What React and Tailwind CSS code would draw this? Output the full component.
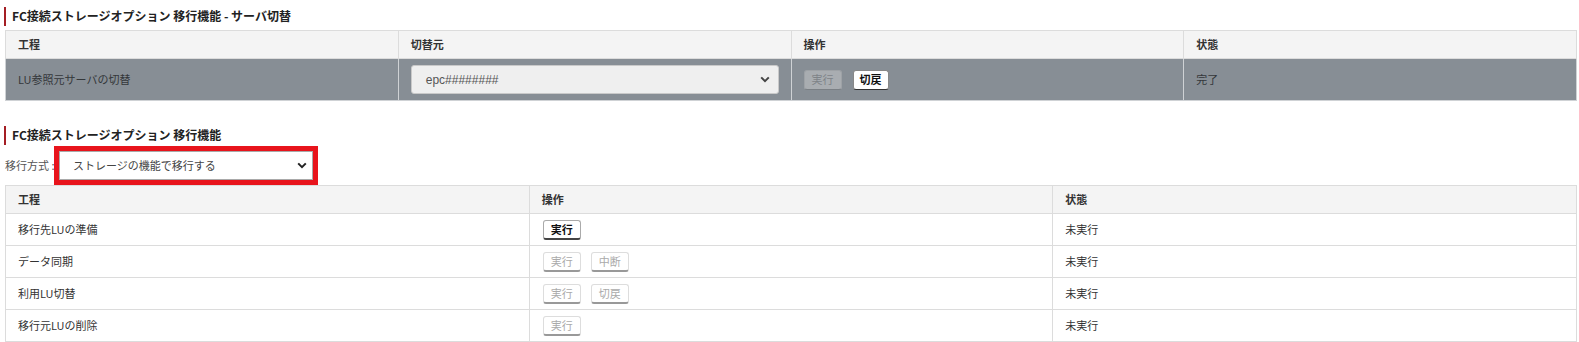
const font = "font-['Noto_Sans_CJK_JP','Noto_Sans',sans-serif]";

const Chevron = ({ className = "" }) => (
  <svg width="10" height="7" viewBox="0 0 10 7" className={className}>
    <path d="M1.2 1.4 5 5.2 8.8 1.4" fill="none" stroke="currentColor" strokeWidth="2" />
  </svg>
);

const SectionTitle = ({ children }) => (
  <div className="flex items-center h-[20px] pl-[4px]">
    <div className="w-[2px] h-[19px] bg-[#a41e24]" />
    <div className="pl-[6px] text-[12px] font-bold text-[#222]">{children}</div>
  </div>
);

const Btn = ({ children, active, dark }) => {
  if (dark) {
    return active ? (
      <div className="w-[36px] h-[20px] flex items-center justify-center rounded-[3px] bg-white border border-[#888] border-b-[#333] text-[11px] font-bold text-[#111]">
        {children}
      </div>
    ) : (
      <div className="w-[38px] h-[20px] flex items-center justify-center rounded-[3px] bg-[#a9adb1] border border-[#9ea2a6] border-b-[#7b8085] text-[11px] text-[#7e8388]">
        {children}
      </div>
    );
  }
  return active ? (
    <div className="w-[38px] h-[20px] flex items-center justify-center rounded-[3px] bg-white border border-[#aaa] border-b-2 border-b-[#444] text-[11px] font-bold text-[#111]">
      {children}
    </div>
  ) : (
    <div className="w-[38px] h-[20px] flex items-center justify-center rounded-[3px] bg-white border border-[#ddd] border-b-2 border-b-[#999] text-[11px] text-[#aaa]">
      {children}
    </div>
  );
};

const steps = [
  { name: "移行先LUの準備", buttons: [["実行", true]], status: "未実行" },
  { name: "データ同期", buttons: [["実行", false], ["中断", false]], status: "未実行" },
  { name: "利用LU切替", buttons: [["実行", false], ["切戻", false]], status: "未実行" },
  { name: "移行元LUの削除", buttons: [["実行", false]], status: "未実行" },
];

export default function App() {
  return (
    <div className={`${font} bg-white w-[1579px] h-[342px] pt-[6px] text-[#333]`}>
      <SectionTitle>FC接続ストレージオプション 移行機能 - サーバ切替</SectionTitle>

      <table className="ml-[5px] mt-[4px] w-[1572px] table-fixed border-collapse border border-[#dcdcdc] text-[11px]">
        <thead>
          <tr className="h-[28px] bg-[#f4f4f4]">
            <th className="text-left font-bold px-[12px] border border-[#dcdcdc]">工程</th>
            <th className="text-left font-bold px-[12px] border border-[#dcdcdc]">切替元</th>
            <th className="text-left font-bold px-[12px] border border-[#dcdcdc]">操作</th>
            <th className="text-left font-bold px-[12px] border border-[#dcdcdc]">状態</th>
          </tr>
        </thead>
        <tbody>
          <tr className="h-[42px] bg-[#878e95] text-[#34373a]">
            <td className="px-[12px] border border-[#cfd2d5]">LU参照元サーバの切替</td>
            <td className="px-[12px] border border-[#cfd2d5]">
              <div className="w-[368px] h-[29px] flex items-center justify-between pl-[14px] pr-[8px] rounded-[3px] bg-[#efefef] border border-[#c9c9c9] text-[12px] text-[#555]">
                <span className="font-['Liberation_Sans',sans-serif]">epc########</span>
                <Chevron className="text-[#444]" />
              </div>
            </td>
            <td className="px-[12px] border border-[#cfd2d5]">
              <div className="flex gap-[11px]">
                <Btn dark>実行</Btn>
                <Btn dark active>切戻</Btn>
              </div>
            </td>
            <td className="px-[12px] border border-[#cfd2d5]">完了</td>
          </tr>
        </tbody>
      </table>

      <div className="mt-[24px]">
        <SectionTitle>FC接続ストレージオプション 移行機能</SectionTitle>
      </div>

      <div className="flex items-center h-[39px] mt-[1px] pl-[5px] text-[11px] text-[#555]">
        <span className="w-[49px] whitespace-nowrap overflow-visible">移行方式 :</span>
        <div className="relative border-[5px] border-[#e8141c] bg-white">
          <div className="w-[254px] h-[29px] flex items-center justify-between pl-[13px] pr-[5px] bg-white border border-[#a9a9a9] text-[11px] text-[#444]">
            <span>ストレージの機能で移行する</span>
            <Chevron className="text-[#222]" />
          </div>
        </div>
      </div>

      <table className="ml-[5px] w-[1572px] table-fixed border-collapse border border-[#dcdcdc] text-[11px]">
        <thead>
          <tr className="h-[28px] bg-[#f4f4f4]">
            <th className="text-left font-bold px-[12px] border border-[#dcdcdc]">工程</th>
            <th className="text-left font-bold px-[12px] border border-[#dcdcdc]">操作</th>
            <th className="text-left font-bold px-[12px] border border-[#dcdcdc]">状態</th>
          </tr>
        </thead>
        <tbody>
          {steps.map((s) => (
            <tr key={s.name} className="h-[32px]">
              <td className="px-[12px] border border-[#dcdcdc]">{s.name}</td>
              <td className="px-[13px] border border-[#dcdcdc]">
                <div className="flex gap-[10px]">
                  {s.buttons.map(([label, active]) => (
                    <Btn key={label} active={active}>{label}</Btn>
                  ))}
                </div>
              </td>
              <td className="px-[12px] border border-[#dcdcdc]">{s.status}</td>
            </tr>
          ))}
        </tbody>
      </table>
    </div>
  );
}
